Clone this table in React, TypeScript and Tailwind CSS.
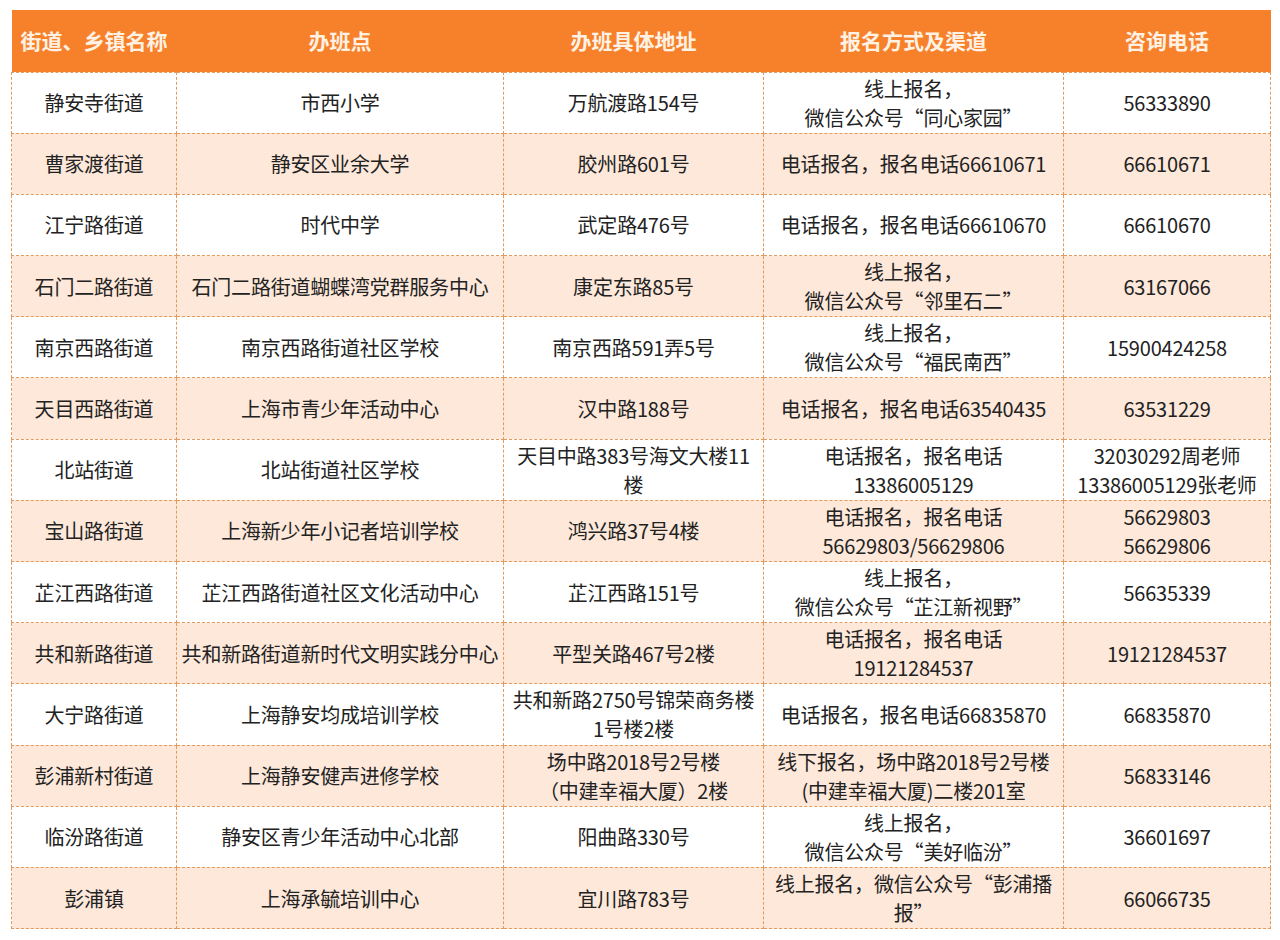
const headers = ["街道、乡镇名称", "办班点", "办班具体地址", "报名方式及渠道", "咨询电话"];

const rows: string[][] = [
  ["静安寺街道", "市西小学", "万航渡路154号", "线上报名，\n微信公众号“同心家园”", "56333890"],
  ["曹家渡街道", "静安区业余大学", "胶州路601号", "电话报名，报名电话66610671", "66610671"],
  ["江宁路街道", "时代中学", "武定路476号", "电话报名，报名电话66610670", "66610670"],
  ["石门二路街道", "石门二路街道蝴蝶湾党群服务中心", "康定东路85号", "线上报名，\n微信公众号“邻里石二”", "63167066"],
  ["南京西路街道", "南京西路街道社区学校", "南京西路591弄5号", "线上报名，\n微信公众号“福民南西”", "15900424258"],
  ["天目西路街道", "上海市青少年活动中心", "汉中路188号", "电话报名，报名电话63540435", "63531229"],
  ["北站街道", "北站街道社区学校", "天目中路383号海文大楼11\n楼", "电话报名，报名电话\n13386005129", "32030292周老师\n13386005129张老师"],
  ["宝山路街道", "上海新少年小记者培训学校", "鸿兴路37号4楼", "电话报名，报名电话\n56629803/56629806", "56629803\n56629806"],
  ["芷江西路街道", "芷江西路街道社区文化活动中心", "芷江西路151号", "线上报名，\n微信公众号“芷江新视野”", "56635339"],
  ["共和新路街道", "共和新路街道新时代文明实践分中心", "平型关路467号2楼", "电话报名，报名电话\n19121284537", "19121284537"],
  ["大宁路街道", "上海静安均成培训学校", "共和新路2750号锦荣商务楼\n1号楼2楼", "电话报名，报名电话66835870", "66835870"],
  ["彭浦新村街道", "上海静安健声进修学校", "场中路2018号2号楼\n（中建幸福大厦）2楼", "线下报名，场中路2018号2号楼\n(中建幸福大厦)二楼201室", "56833146"],
  ["临汾路街道", "静安区青少年活动中心北部", "阳曲路330号", "线上报名，\n微信公众号“美好临汾”", "36601697"],
  ["彭浦镇", "上海承毓培训中心", "宜川路783号", "线上报名，微信公众号“彭浦播\n报”", "66066735"],
];

const widths = ["w-[165px]", "w-[327px]", "w-[260px]", "w-[300px]", "w-[207px]"];

function Cell({ text }: { text: string }) {
  const lines = text.split("\n");
  return (
    <td className="border border-dashed border-[#e39a5c] p-0 text-center align-middle text-[20px] leading-[29px] text-[#222] whitespace-nowrap tracking-[-0.2px]">
      {lines.map((line, i) => (
        <div key={i}>{line}</div>
      ))}
    </td>
  );
}

export default function App() {
  return (
    <div
      className="min-h-[940px] w-[1280px] bg-white pl-[11px] pt-[10px]"
      style={{ fontFamily: '"Noto Sans CJK SC", "Microsoft YaHei", sans-serif' }}
    >
      <table className="table-fixed border-collapse">
        <thead>
          <tr className="h-[62px] bg-[#f7812b]">
            {headers.map((h, i) => (
              <th
                key={h}
                className={`${widths[i]} p-0 text-center align-middle text-[21px] font-bold text-[#fff2e4]`}
              >
                {h}
              </th>
            ))}
          </tr>
        </thead>
        <tbody>
          {rows.map((r, ri) => (
            <tr key={ri} className={`h-[61.2px] ${ri % 2 === 1 ? "bg-[#fde8da]" : "bg-white"}`}>
              {r.map((c, ci) => (
                <Cell key={ci} text={c} />
              ))}
            </tr>
          ))}
        </tbody>
      </table>
    </div>
  );
}
